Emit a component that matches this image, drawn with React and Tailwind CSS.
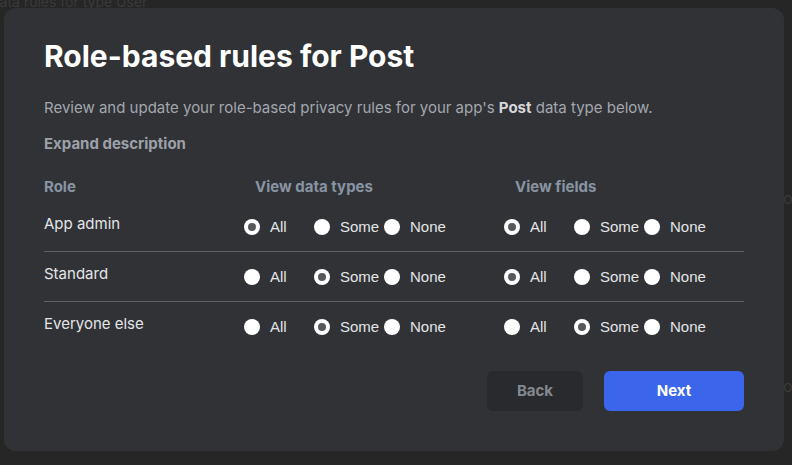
import { useState } from 'react';

const ROLES = [
  { name: 'App admin', types: 'all', fields: 'all' },
  { name: 'Standard', types: 'some', fields: 'all' },
  { name: 'Everyone else', types: 'some', fields: 'some' },
];

const OPTIONS = [
  { value: 'all', label: 'All' },
  { value: 'some', label: 'Some' },
  { value: 'none', label: 'None' },
];

const Radio = ({ checked, label, onClick }) => (
  <button type="button" onClick={onClick} className="flex w-[70px] shrink-0 items-center gap-[10px] text-left">
    <span className="flex h-4 w-4 shrink-0 items-center justify-center rounded-full bg-white">
      {checked && <span className="h-2 w-2 rounded-full bg-[#56585c]" />}
    </span>
    <span className="text-[15px] text-[#e4e5e7]" style={{ fontFamily: '"Liberation Sans", Arial, sans-serif' }}>
      {label}
    </span>
  </button>
);

const RadioGroup = ({ value, onChange }) => (
  <div className="flex w-[260px] shrink-0 items-center">
    {OPTIONS.map((o) => (
      <Radio key={o.value} checked={value === o.value} label={o.label} onClick={() => onChange(o.value)} />
    ))}
  </div>
);

export default function App() {
  const [roles, setRoles] = useState(ROLES);

  const update = (i, key, val) => {
    setRoles((prev) => prev.map((r, idx) => (idx === i ? { ...r, [key]: val } : r)));
  };

  return (
    <div className="relative h-[465px] w-[792px] overflow-hidden bg-[#262626]" style={{ fontFamily: 'Inter, "Noto Sans", sans-serif' }}>
      {/* page behind the dialog */}
      <div className="absolute left-[-9px] top-[-8px] text-[14px] leading-5 text-[#3a3a3a]">data rules for type User</div>
      <div className="absolute left-[778px] top-[186px] text-[16px] text-[#3a3a3a]">to</div>
      <div className="absolute left-[778px] top-[374px] text-[16px] text-[#3a3a3a]">to</div>

      <div className="absolute left-[4px] top-[8px] h-[443px] w-[780px] rounded-[12px] bg-[#303236] px-10 pt-[28px]">
        <h1 className="text-[30px] font-bold leading-[40px] text-white">Role-based rules for Post</h1>

        <p className="mt-[22px] text-[15px] leading-5 text-[#a3a7ae]">
          Review and update your role-based privacy rules for your app's{' '}
          <span className="font-bold text-[#d6d8db]">Post</span> data type below.
        </p>
        <button type="button" className="mt-[16px] text-[15px] font-bold leading-5 text-[#9ca1a9]">
          Expand description
        </button>

        <div className="mt-[22px] w-[700px]">
          <div className="flex h-[20px] items-center text-[15px] font-bold text-[#8994a3]">
            <div className="w-[211px] shrink-0">Role</div>
            <div className="w-[260px] shrink-0">View data types</div>
            <div>View fields</div>
          </div>

          <div className="mt-[5px]">
            {roles.map((r, i) => (
              <div
                key={r.name}
                className={`flex h-[50px] items-start pt-[11px] ${i < roles.length - 1 ? 'border-b border-[#5d6066]' : ''}`}
              >
                <div className="w-[200px] shrink-0 pt-[1px] text-[15px] leading-5 text-[#e4e5e7]">{r.name}</div>
                <div className="flex shrink-0 pt-[3px]">
                  <RadioGroup value={r.types} onChange={(v) => update(i, 'types', v)} />
                  <RadioGroup value={r.fields} onChange={(v) => update(i, 'fields', v)} />
                </div>
              </div>
            ))}
          </div>
        </div>

        <div className="mt-[19px] flex w-[700px] justify-end gap-[21px]">
          <button type="button" className="h-[40px] w-[96px] rounded-[6px] bg-[#282a2e] text-[15px] font-bold text-[#85888e]">
            Back
          </button>
          <button type="button" className="h-[40px] w-[140px] rounded-[6px] bg-[#3b66ec] text-[15px] font-bold text-white">
            Next
          </button>
        </div>
      </div>
    </div>
  );
}
